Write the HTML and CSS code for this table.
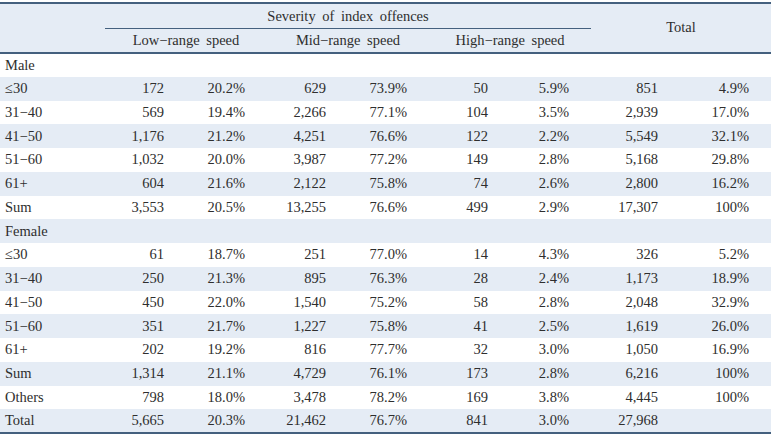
FILE: index.html
```html
<!DOCTYPE html>
<html>
<head>
<meta charset="utf-8">
<link rel="stylesheet" href="styles.css">
</head>
<body>
<div class="wrap">
<table class="tbl">
<colgroup>
<col class="c-label">
<col class="c-n"><col class="c-p">
<col class="c-n"><col class="c-p">
<col class="c-n"><col class="c-p">
<col class="c-tn"><col class="c-tp">
</colgroup>
<thead>
<tr class="h1">
<th class="blank" rowspan="2"></th>
<th class="sev" colspan="6"><span>Severity of index offences</span></th>
<th class="tot" colspan="2" rowspan="2">Total</th>
</tr>
<tr class="h2">
<th colspan="2">Low−range speed</th>
<th colspan="2">Mid−range speed</th>
<th colspan="2">High−range speed</th>
</tr>
</thead>
<tbody>
<tr><td class="lbl">Male</td><td></td><td></td><td></td><td></td><td></td><td></td><td></td><td></td></tr>
<tr class="alt"><td class="lbl">≤30</td><td>172</td><td>20.2%</td><td>629</td><td>73.9%</td><td>50</td><td>5.9%</td><td>851</td><td>4.9%</td></tr>
<tr><td class="lbl">31−40</td><td>569</td><td>19.4%</td><td>2,266</td><td>77.1%</td><td>104</td><td>3.5%</td><td>2,939</td><td>17.0%</td></tr>
<tr class="alt"><td class="lbl">41−50</td><td>1,176</td><td>21.2%</td><td>4,251</td><td>76.6%</td><td>122</td><td>2.2%</td><td>5,549</td><td>32.1%</td></tr>
<tr><td class="lbl">51−60</td><td>1,032</td><td>20.0%</td><td>3,987</td><td>77.2%</td><td>149</td><td>2.8%</td><td>5,168</td><td>29.8%</td></tr>
<tr class="alt"><td class="lbl">61+</td><td>604</td><td>21.6%</td><td>2,122</td><td>75.8%</td><td>74</td><td>2.6%</td><td>2,800</td><td>16.2%</td></tr>
<tr><td class="lbl">Sum</td><td>3,553</td><td>20.5%</td><td>13,255</td><td>76.6%</td><td>499</td><td>2.9%</td><td>17,307</td><td>100%</td></tr>
<tr class="alt"><td class="lbl">Female</td><td></td><td></td><td></td><td></td><td></td><td></td><td></td><td></td></tr>
<tr><td class="lbl">≤30</td><td>61</td><td>18.7%</td><td>251</td><td>77.0%</td><td>14</td><td>4.3%</td><td>326</td><td>5.2%</td></tr>
<tr class="alt"><td class="lbl">31−40</td><td>250</td><td>21.3%</td><td>895</td><td>76.3%</td><td>28</td><td>2.4%</td><td>1,173</td><td>18.9%</td></tr>
<tr><td class="lbl">41−50</td><td>450</td><td>22.0%</td><td>1,540</td><td>75.2%</td><td>58</td><td>2.8%</td><td>2,048</td><td>32.9%</td></tr>
<tr class="alt"><td class="lbl">51−60</td><td>351</td><td>21.7%</td><td>1,227</td><td>75.8%</td><td>41</td><td>2.5%</td><td>1,619</td><td>26.0%</td></tr>
<tr><td class="lbl">61+</td><td>202</td><td>19.2%</td><td>816</td><td>77.7%</td><td>32</td><td>3.0%</td><td>1,050</td><td>16.9%</td></tr>
<tr class="alt"><td class="lbl">Sum</td><td>1,314</td><td>21.1%</td><td>4,729</td><td>76.1%</td><td>173</td><td>2.8%</td><td>6,216</td><td>100%</td></tr>
<tr><td class="lbl">Others</td><td>798</td><td>18.0%</td><td>3,478</td><td>78.2%</td><td>169</td><td>3.8%</td><td>4,445</td><td>100%</td></tr>
<tr class="alt last"><td class="lbl">Total</td><td>5,665</td><td>20.3%</td><td>21,462</td><td>76.7%</td><td>841</td><td>3.0%</td><td>27,968</td><td></td></tr>
</tbody>
</table>
</div>
</body>
</html>
```

FILE: styles.css
```css
html, body {
  margin: 0;
  padding: 0;
  background: #ffffff;
}
.wrap {
  padding-top: 2px;
  width: 771px;
}
.tbl {
  border-collapse: collapse;
  table-layout: fixed;
  width: 771px;
  font-family: "Liberation Serif", "DejaVu Serif", serif;
  font-size: 14.5px;
  color: #2e2e2e;
  border-top: 2px solid #44607e;
  border-bottom: 2px solid #44607e;
}
.c-label { width: 105px; }
.c-n { width: 81px; }
.c-p { width: 81px; }
.c-tn { width: 89px; }
.c-tp { width: 91px; }
thead th {
  background: #e5ecf5;
  font-weight: normal;
  height: 24px;
  padding: 0;
  text-align: center;
  word-spacing: 3px;
}
.h1 th { height: 24px; }
.h2 th { height: 23px; border-bottom: 2px solid #44607e; }
.h1 .blank, .h1 .tot { border-bottom: 2px solid #44607e; }
.sev { border-bottom: 1px solid #44607e; }
.tot { padding-bottom: 2px; }
tbody td {
  height: 23.75px;
  padding: 0 22px 0 0;
  text-align: right;
  white-space: nowrap;
  box-sizing: border-box;
}
tbody td.lbl {
  text-align: left;
  padding: 0 0 0 5px;
}
tbody tr.alt td { background: #e5ecf5; }
```
